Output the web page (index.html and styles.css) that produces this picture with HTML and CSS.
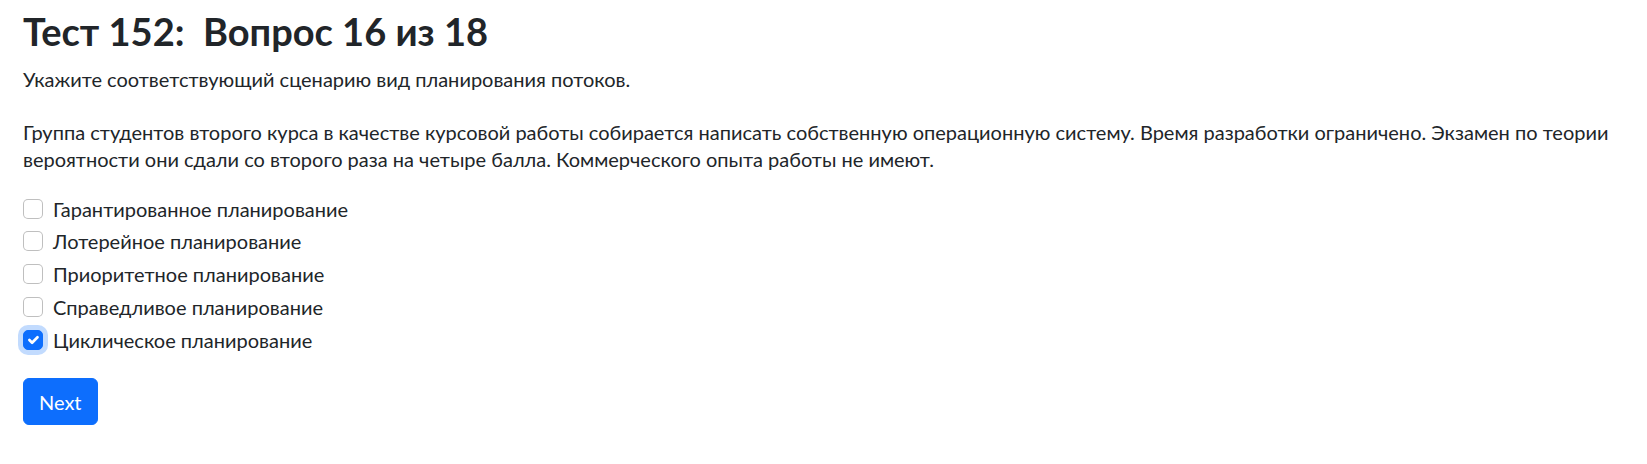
FILE: index.html
```html
<!DOCTYPE html>
<html lang="ru">
<head>
<meta charset="utf-8">
<title>Тест 152</title>
<link rel="stylesheet" href="styles.css">
</head>
<body>
<main class="quiz">
  <h1 class="quiz-title">Тест 152:&nbsp; Вопрос 16 из 18</h1>
  <p class="quiz-prompt">Укажите соответствующий сценарию вид планирования потоков.</p>
  <p class="quiz-text">Группа студентов второго курса в качестве курсовой работы собирается написать собственную операционную систему. Время разработки ограничено. Экзамен по теории вероятности они сдали со второго раза на четыре балла. Коммерческого опыта работы не имеют.</p>
  <form class="quiz-form">
    <div class="options">
      <label class="option"><span class="box"></span><span class="option-text">Гарантированное планирование</span></label>
      <label class="option"><span class="box"></span><span class="option-text">Лотерейное планирование</span></label>
      <label class="option"><span class="box"></span><span class="option-text">Приоритетное планирование</span></label>
      <label class="option"><span class="box"></span><span class="option-text">Справедливое планирование</span></label>
      <label class="option"><span class="box box-checked"><svg class="check" viewBox="0 0 20 20" width="20" height="20"><path d="m6 10 3 3 6-6" fill="none" stroke="#fff" stroke-width="3" stroke-linecap="round" stroke-linejoin="round"/></svg></span><span class="option-text">Циклическое планирование</span></label>
    </div>
    <button type="button" class="btn-next">Next</button>
  </form>
</main>
</body>
</html>
```
FILE: styles.css
```css
* { box-sizing: border-box; }

body {
  margin: 0;
  background: #fff;
  color: #212529;
  font-family: "Lato", "Open Sans", sans-serif;
  font-size: 20px;
  line-height: 30px;
}

.quiz {
  padding: 9px 24px 0 23px;
}

.quiz-title {
  margin: 0 0 11px;
  font-size: 38px;
  line-height: 45.6px;
  font-weight: 700;
}

.quiz-prompt {
  margin: 0 0 26px;
  line-height: 27px;
}

.quiz-text {
  margin: 0 0 21px;
  line-height: 27px;
}

.quiz-form {
  display: flex;
  flex-direction: column;
  align-items: flex-start;
}

.options {
  display: flex;
  flex-direction: column;
  margin-bottom: 21px;
}

.option {
  display: flex;
  align-items: flex-start;
  min-height: 30px;
  margin-bottom: 2.75px;
  line-height: 30px;
}

.box {
  flex: none;
  width: 20px;
  height: 20px;
  margin-top: 5px;
  margin-right: 10px;
  border: 1.25px solid rgba(0, 0, 0, 0.25);
  border-radius: 5px;
  background: #fff;
  display: flex;
  align-items: center;
  justify-content: center;
}

.box-checked {
  background: #0d6efd;
  border-color: #0d6efd;
  box-shadow: 0 0 0 5px rgba(13, 110, 253, 0.25);
}

.check {
  display: block;
  width: 18px;
  height: 18px;
}

.btn-next {
  font-family: inherit;
  font-size: 20px;
  line-height: 30px;
  color: #fff;
  background: #0d6efd;
  border: 1px solid #0d6efd;
  border-radius: 6px;
  padding: 7.5px 15px;
  cursor: pointer;
}
```
